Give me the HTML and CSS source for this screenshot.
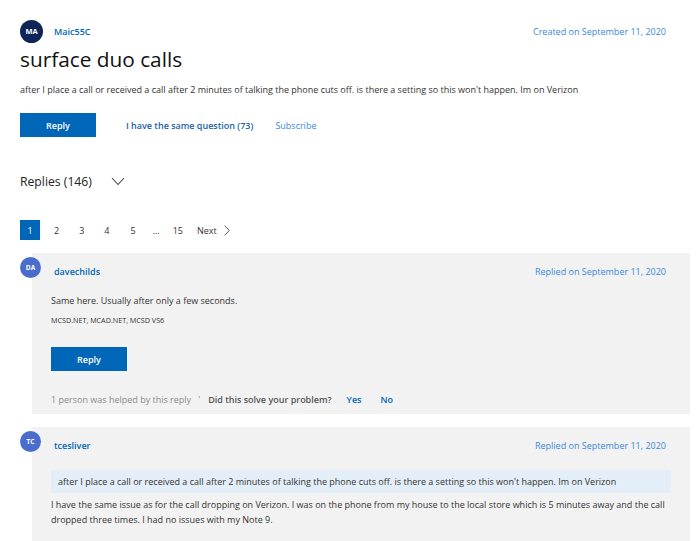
FILE: index.html
```html
<!DOCTYPE html>
<html>
<head>
<meta charset="utf-8">
<link rel="stylesheet" href="styles.css">
</head>
<body>
<div class="page">
  <div class="question">
    <div class="q-head">
      <div class="author">
        <span class="avatar avatar-lg">MA</span>
        <span class="name">Maic55C</span>
      </div>
      <span class="date">Created on September 11, 2020</span>
    </div>
    <h1 class="title">surface duo calls</h1>
    <p class="q-body">after I place a call or received a call after 2 minutes of talking the phone cuts off. is there a setting so this won't happen. Im on Verizon</p>
    <div class="actions">
      <button class="btn">Reply</button>
      <span class="same">I have the same question (73)</span>
      <span class="subscribe">Subscribe</span>
    </div>
  </div>

  <div class="replies-head">
    <span class="replies-title">Replies (146)</span>
    <svg class="chev" width="14" height="9" viewBox="0 0 14 9"><path d="M1 1 L7 7.5 L13 1" fill="none" stroke="#444" stroke-width="1.1"/></svg>
  </div>

  <div class="pager">
    <span class="pg active">1</span>
    <span class="pg p2">2</span>
    <span class="pg p3">3</span>
    <span class="pg p4">4</span>
    <span class="pg p5">5</span>
    <span class="pg dots">...</span>
    <span class="pg p15">15</span>
    <span class="pg next">Next
      <svg width="6" height="11" viewBox="0 0 6 11"><path d="M0.6 0.6 L5.3 5.5 L0.6 10.4" fill="none" stroke="#555" stroke-width="1"/></svg>
    </span>
  </div>

  <div class="reply">
    <span class="avatar avatar-sm">DA</span>
    <div class="card">
      <div class="card-head">
        <span class="name">davechilds</span>
        <span class="date">Replied on September 11, 2020</span>
      </div>
      <p class="r-text">Same here. Usually after only a few seconds.</p>
      <p class="sig">MCSD.NET, MCAD.NET, MCSD VS6</p>
      <button class="btn">Reply</button>
      <div class="helped">
        <span class="muted">1 person was helped by this reply</span>
        <span class="tick">'</span>
        <span class="solve">Did this solve your problem?</span>
        <span class="yn">Yes</span>
        <span class="yn">No</span>
      </div>
    </div>
  </div>

  <div class="reply">
    <span class="avatar avatar-sm">TC</span>
    <div class="card card-open">
      <div class="card-head">
        <span class="name">tcesliver</span>
        <span class="date">Replied on September 11, 2020</span>
      </div>
      <div class="quote">after I place a call or received a call after 2 minutes of talking the phone cuts off. is there a setting so this won't happen. Im on Verizon</div>
      <p class="r-text para">I have the same issue as for the call dropping on Verizon. I was on the phone from my house to the local store which is 5 minutes away and the call dropped three times. I had no issues with my Note 9.</p>
    </div>
  </div>
</div>
</body>
</html>
```
FILE: styles.css
```css
* { box-sizing: border-box; }
html, body { margin: 0; padding: 0; background: #fff; }
body {
  font-family: "Open Sans", "Noto Sans", sans-serif;
  color: #262626;
  font-size: 9px;
  overflow: hidden;
}
.page { padding: 19px 10px 0 20px; width: 700px; }
.question { padding-right: 24px; }

.q-head { display: flex; justify-content: space-between; align-items: center; height: 24px; }
.author { display: flex; align-items: center; gap: 11px; }
.avatar {
  display: flex; align-items: center; justify-content: center;
  border-radius: 50%; color: #fff; font-weight: 700; flex: none;
}
.avatar-lg { width: 23px; height: 23px; background: #0e2557; font-size: 7.5px; }
.avatar-sm { width: 21px; height: 21px; background: #4a6ccc; font-size: 6.5px; }
.name { color: #0067b8; font-weight: 600; font-size: 9px; }
.date { color: #3b89d9; font-size: 9px; }

.title { font-size: 20.8px; font-weight: 400; margin: 0; line-height: 28px; color: #111; margin-top: 2px; }
.q-body { margin: 10px 0 0; line-height: 14px; color: #333; }

.actions { display: flex; align-items: center; margin-top: 16px; }
.btn {
  width: 76px; height: 24px; background: #0067b8; color: #fff; border: 0;
  font-family: inherit; font-size: 9px; font-weight: 600; padding: 0;
}
.same { color: #1b5fa8; font-weight: 600; margin-left: 30px; }
.subscribe { color: #3b89d9; margin-left: 22px; }

.replies-head { display: flex; align-items: center; gap: 19px; margin-top: 35px; height: 18px; }
.replies-title { font-size: 12.2px; color: #222; }
.chev { margin-top: 1px; }

.pager { display: flex; align-items: center; margin-top: 30px; height: 20px; }
.pg { color: #333; font-size: 9px; }
.pg.active { width: 20px; height: 20px; background: #0067b8; color: #fff; display: flex; align-items: center; justify-content: center; }
.p2 { margin-left: 14px; }
.p3, .p4 { margin-left: 20px; }
.p5 { margin-left: 21px; }
.dots { margin-left: 17px; }
.p15 { margin-left: 13px; }
.pg.next { display: flex; align-items: center; gap: 7px; margin-left: 14px; }

.reply { display: flex; margin-top: 13px; position: relative; }
.reply .avatar { position: absolute; left: 0; top: 4px; z-index: 1; }
.card { margin-left: 12px; background: #f2f2f2; flex: 1; padding: 11px 24px 7px 19px; }
.card-head { display: flex; justify-content: space-between; align-items: center; height: 15px; padding-left: 3px; }
.r-text { margin: 15px 0 0; line-height: 14px; color: #333; }
.sig { margin: 7px 0 0; font-size: 7.2px; color: #333; }
.card .btn { margin-top: 22px; }
.helped { display: flex; align-items: center; margin-top: 21px; height: 15px; }
.muted { color: #8a8a8a; }
.tick { color: #888; margin-left: 7px; }
.solve { color: #555; font-weight: 600; margin-left: 8px; }
.yn { color: #0067b8; font-weight: 600; margin-left: 15px; }
.yn + .yn { margin-left: 19px; }

.card-open { min-height: 130px; }
.quote { background: #e4eef8; margin-top: 17px; height: 23px; line-height: 23px; padding-left: 7px; color: #333; margin-right: -5px; }
.para { margin-top: 4px; line-height: 15px; }
```
